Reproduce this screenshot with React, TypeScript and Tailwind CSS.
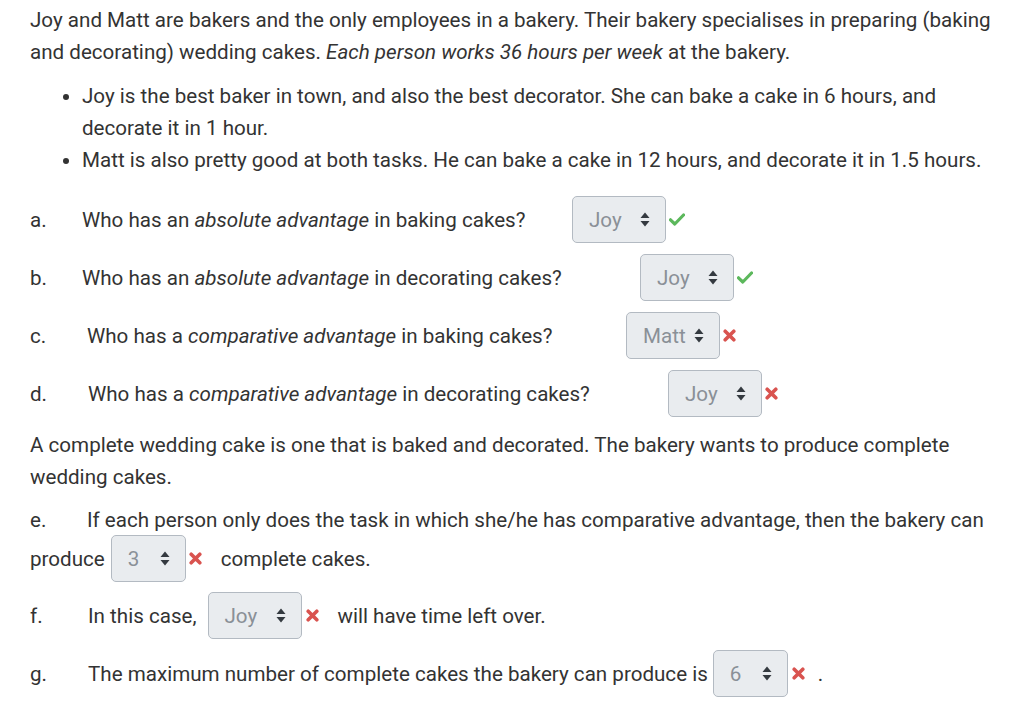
import React from "react";

function Arrows() {
  return (
    <svg width="10" height="15" viewBox="0 0 10 15" className="shrink-0">
      <path d="M5 0.5 L9.5 6 L0.5 6 Z" fill="#343a40" />
      <path d="M5 14.5 L9.5 9 L0.5 9 Z" fill="#343a40" />
    </svg>
  );
}

function Check() {
  return (
    <svg width="16" height="13" viewBox="0 0 16 13" className="shrink-0">
      <path d="M1.5 6.8 L5.8 11 L14.5 2" fill="none" stroke="#5cb85c" strokeWidth="3.2" strokeLinecap="round" strokeLinejoin="round" />
    </svg>
  );
}

function Cross() {
  return (
    <svg width="13" height="13" viewBox="0 0 13 13" className="shrink-0">
      <path d="M2.2 2.2 L10.8 10.8 M10.8 2.2 L2.2 10.8" fill="none" stroke="#d9534f" strokeWidth="3.6" strokeLinecap="round" />
    </svg>
  );
}

function Select({ value, narrow }: { value: string; narrow?: boolean }) {
  return (
    <span
      className={`inline-flex h-[47px] shrink-0 items-center justify-between rounded-[5px] border border-[#b3bac2] bg-[#e9ecef] pl-4 pr-[15px] text-[#8a9097] ${
        narrow ? "w-[75px]" : "w-[94px]"
      }`}
    >
      <span>{value}</span>
      <Arrows />
    </span>
  );
}

function Question({
  label,
  labelW,
  textW,
  children,
  value,
  ok,
}: {
  label: string;
  labelW: string;
  textW: string;
  children: React.ReactNode;
  value: string;
  ok: boolean;
}) {
  return (
    <div className="flex h-[47px] items-center">
      <span className={labelW}>{label}</span>
      <span className={`${textW} whitespace-nowrap`}>{children}</span>
      <Select value={value} />
      <span className="ml-[3px]">{ok ? <Check /> : <Cross />}</span>
    </div>
  );
}

export default function App() {
  return (
    <div
      className="min-h-screen bg-white pl-[30px] pr-[10px] pt-1 text-[20.6px] leading-[32px] text-[#333]"
      style={{ fontFamily: "Roboto, 'Liberation Sans', sans-serif" }}
    >
      <p>
        Joy and Matt are bakers and the only employees in a bakery. Their bakery specialises in preparing (baking
        <br />
        and decorating) wedding cakes. <i>Each person works 36 hours per week</i> at the bakery.
      </p>

      <ul className="mt-3 list-disc pl-[52px]">
        <li>
          Joy is the best baker in town, and also the best decorator. She can bake a cake in 6 hours, and
          <br />
          decorate it in 1 hour.
        </li>
        <li>Matt is also pretty good at both tasks. He can bake a cake in 12 hours, and decorate it in 1.5 hours.</li>
      </ul>

      <div className="mt-5 flex flex-col gap-[11px]">
        <Question label="a." labelW="w-[52px]" textW="w-[490px]" value="Joy" ok>
          Who has an <i>absolute advantage</i> in baking cakes?
        </Question>
        <Question label="b." labelW="w-[52px]" textW="w-[558px]" value="Joy" ok>
          Who has an <i>absolute advantage</i> in decorating cakes?
        </Question>
        <Question label="c." labelW="w-[57px]" textW="w-[539px]" value="Matt" ok={false}>
          Who has a <i>comparative advantage</i> in baking cakes?
        </Question>
        <Question label="d." labelW="w-[58px]" textW="w-[580px]" value="Joy" ok={false}>
          Who has a <i>comparative advantage</i> in decorating cakes?
        </Question>
      </div>

      <p className="mt-[12px]">
        A complete wedding cake is one that is baked and decorated. The bakery wants to produce complete
        <br />
        wedding cakes.
      </p>

      <div className="mt-[11px]">
        <div className="flex">
          <span className="w-[57px]">e.</span>
          <span className="whitespace-nowrap">
            If each person only does the task in which she/he has comparative advantage, then the bakery can
          </span>
        </div>
        <div className="-mt-[1px] flex h-[47px] items-center">
          <span>produce</span>
          <span className="ml-[6px]">
            <Select value="3" narrow />
          </span>
          <span className="ml-[3px]">
            <Cross />
          </span>
          <span className="ml-[19px]">complete cakes.</span>
        </div>
      </div>

      <div className="mt-[10px] flex h-[47px] items-center">
        <span className="w-[58px]">f.</span>
        <span>In this case,</span>
        <span className="ml-[11px]">
          <Select value="Joy" />
        </span>
        <span className="ml-[4px]">
          <Cross />
        </span>
        <span className="ml-[19px]">will have time left over.</span>
      </div>

      <div className="mt-[11px] flex h-[47px] items-center">
        <span className="w-[58px]">g.</span>
        <span>The maximum number of complete cakes the bakery can produce is</span>
        <span className="ml-[5px]">
          <Select value="6" narrow />
        </span>
        <span className="ml-[4px]">
          <Cross />
        </span>
        <span className="ml-[13px]">.</span>
      </div>
    </div>
  );
}
